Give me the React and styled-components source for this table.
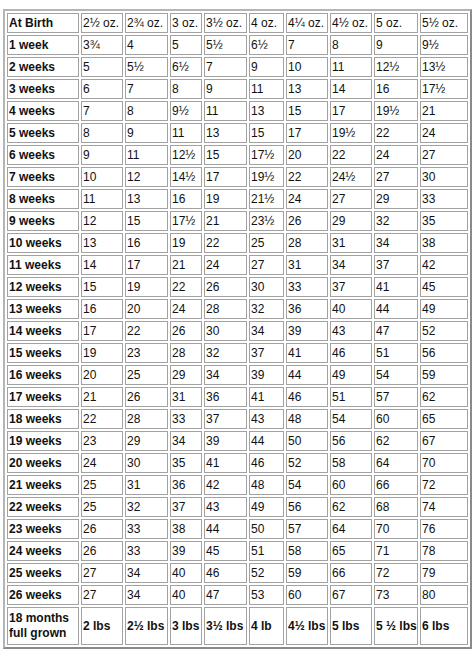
import React from 'react'
import styled, { createGlobalStyle } from 'styled-components'

const GlobalStyle = createGlobalStyle`
  html, body {
    margin: 0;
    padding: 0;
    background: #ffffff;
  }
  body {
    font-family: 'Liberation Sans', Arial, sans-serif;
  }
`

const Page = styled.div`
  padding: 9px 0 0 3px;
`

const Table = styled.table`
  width: 469px;
  table-layout: fixed;
  border-collapse: separate;
  border-spacing: 2px;
  border: 2px solid;
  border-color: #b4b4b4 #8a8a8a #8a8a8a #b4b4b4;
  font-family: 'Liberation Sans', Arial, sans-serif;
  font-size: 12px;
  color: #111111;
`

const Cell = styled.td`
  box-sizing: border-box;
  height: ${(p) => (p.$tall ? '38px' : '20px')};
  padding: 0 1px;
  border: 1px solid #a2a2a2;
  font-weight: ${(p) => (p.$bold ? 'bold' : 'normal')};
  line-height: ${(p) => (p.$tall ? '15px' : '14px')};
  text-align: left;
  vertical-align: middle;
  white-space: ${(p) => (p.$wrap ? 'normal' : 'nowrap')};
  overflow: hidden;
`

// cell widths measured off the picture
const widths = [72, 42, 43, 32, 43, 35, 42, 42, 44, 48]

const header = ['At Birth', '2½ oz.', '2¾ oz.', '3 oz.', '3½ oz.', '4 oz.', '4¼ oz.', '4½ oz.', '5 oz.', '5½ oz.']

const rows = [
  ['1 week', '3¾', '4', '5', '5½', '6½', '7', '8', '9', '9½'],
  ['2 weeks', '5', '5½', '6½', '7', '9', '10', '11', '12½', '13½'],
  ['3 weeks', '6', '7', '8', '9', '11', '13', '14', '16', '17½'],
  ['4 weeks', '7', '8', '9½', '11', '13', '15', '17', '19½', '21'],
  ['5 weeks', '8', '9', '11', '13', '15', '17', '19½', '22', '24'],
  ['6 weeks', '9', '11', '12½', '15', '17½', '20', '22', '24', '27'],
  ['7 weeks', '10', '12', '14½', '17', '19½', '22', '24½', '27', '30'],
  ['8 weeks', '11', '13', '16', '19', '21½', '24', '27', '29', '33'],
  ['9 weeks', '12', '15', '17½', '21', '23½', '26', '29', '32', '35'],
  ['10 weeks', '13', '16', '19', '22', '25', '28', '31', '34', '38'],
  ['11 weeks', '14', '17', '21', '24', '27', '31', '34', '37', '42'],
  ['12 weeks', '15', '19', '22', '26', '30', '33', '37', '41', '45'],
  ['13 weeks', '16', '20', '24', '28', '32', '36', '40', '44', '49'],
  ['14 weeks', '17', '22', '26', '30', '34', '39', '43', '47', '52'],
  ['15 weeks', '19', '23', '28', '32', '37', '41', '46', '51', '56'],
  ['16 weeks', '20', '25', '29', '34', '39', '44', '49', '54', '59'],
  ['17 weeks', '21', '26', '31', '36', '41', '46', '51', '57', '62'],
  ['18 weeks', '22', '28', '33', '37', '43', '48', '54', '60', '65'],
  ['19 weeks', '23', '29', '34', '39', '44', '50', '56', '62', '67'],
  ['20 weeks', '24', '30', '35', '41', '46', '52', '58', '64', '70'],
  ['21 weeks', '25', '31', '36', '42', '48', '54', '60', '66', '72'],
  ['22 weeks', '25', '32', '37', '43', '49', '56', '62', '68', '74'],
  ['23 weeks', '26', '33', '38', '44', '50', '57', '64', '70', '76'],
  ['24 weeks', '26', '33', '39', '45', '51', '58', '65', '71', '78'],
  ['25 weeks', '27', '34', '40', '46', '52', '59', '66', '72', '79'],
  ['26 weeks', '27', '34', '40', '47', '53', '60', '67', '73', '80'],
]

const grown = ['2 lbs', '2½ lbs', '3 lbs', '3½ lbs', '4 lb', '4½ lbs', '5 lbs', '5 ½ lbs', '6 lbs']

const App = () => {
  return (
    <Page>
      <GlobalStyle />
      <Table>
        <colgroup>
          {widths.map((w, i) => (
            <col key={i} style={{ width: w + 'px' }} />
          ))}
        </colgroup>
        <tbody>
          <tr>
            {header.map((h, i) => (
              <Cell key={i} $bold={i === 0}>
                {h}
              </Cell>
            ))}
          </tr>
          {rows.map((r) => (
            <tr key={r[0]}>
              {r.map((v, i) => (
                <Cell key={i} $bold={i === 0}>
                  {v}
                </Cell>
              ))}
            </tr>
          ))}
          <tr>
            <Cell $bold $tall $wrap>
              18 months
              <br />
              full grown
            </Cell>
            {grown.map((g, i) => (
              <Cell key={i} $bold $tall>
                {g}
              </Cell>
            ))}
          </tr>
        </tbody>
      </Table>
    </Page>
  )
}

export default App
